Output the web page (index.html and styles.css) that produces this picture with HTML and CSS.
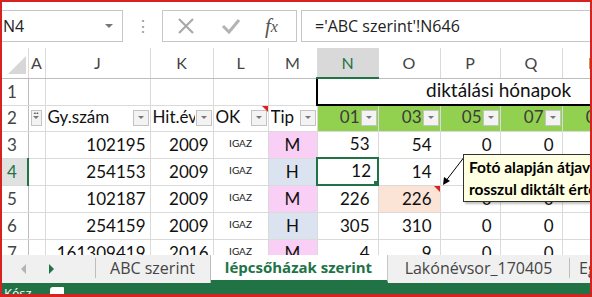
FILE: index.html
```html
<!DOCTYPE html>
<html>
<head>
  <meta charset="UTF-8">
  <title>lépcsőházak szerint</title>
  <link rel="stylesheet" href="styles.css">
</head>
<body>
  <div class="frame">
    <div class="formula-bar">
      <div class="name-box"><span>N4</span><i class="caret"></i></div>
      <div class="grip">⋮</div>
      <div class="fx-tools">
        <svg class="ico" width="18" height="18" viewBox="0 0 18 18"><path d="M2 2 L16 16 M16 2 L2 16" stroke="#a9a9a9" stroke-width="2.2" fill="none"/></svg>
        <svg class="ico" width="20" height="18" viewBox="0 0 20 18"><path d="M2 9 L8 15 L18 3" stroke="#b3b3b3" stroke-width="3" fill="none"/></svg>
        <span class="fx">f<sub>x</sub></span>
      </div>
      <div class="formula">='ABC szerint'!N646</div>
    </div>

    <div class="grid">
      <table class="sheet">
        <colgroup>
          <col style="width:26px"><col style="width:17px"><col style="width:105px"><col style="width:63px">
          <col style="width:55px"><col style="width:49px"><col style="width:61px"><col style="width:62px">
          <col style="width:60px"><col style="width:62px"><col style="width:62px">
        </colgroup>
        <tr class="head">
          <th class="corner"></th>
          <th class="ch">A</th><th class="ch">J</th><th class="ch">K</th><th class="ch">L</th><th class="ch">M</th>
          <th class="ch on">N</th><th class="ch">O</th><th class="ch">P</th><th class="ch">Q</th><th class="ch">R</th>
        </tr>
        <tr class="r1">
          <th class="rh">1</th>
          <td></td><td></td><td></td><td></td><td></td>
          <td class="title" colspan="5">diktálási hónapok</td>
        </tr>
        <tr>
          <th class="rh">2</th>
          <td class="hd"><div class="hdc"><i class="flt mini"></i></div></td>
          <td class="hd"><div class="hdc"><span>Gy.szám</span><i class="flt"></i></div></td>
          <td class="hd"><div class="hdc"><span>Hit.év</span><i class="flt"></i></div></td>
          <td class="hd note"><div class="hdc"><span>OK</span><i class="flt"></i></div></td>
          <td class="hd"><div class="hdc"><span>Tip</span><i class="flt"></i></div></td>
          <td class="hd mo"><div class="hdc"><span>01</span><i class="flt"></i></div></td>
          <td class="hd mo"><div class="hdc"><span>03</span><i class="flt"></i></div></td>
          <td class="hd mo"><div class="hdc"><span>05</span><i class="flt"></i></div></td>
          <td class="hd mo"><div class="hdc"><span>07</span><i class="flt"></i></div></td>
          <td class="hd mo"><div class="hdc"><span>09</span><i class="flt"></i></div></td>
        </tr>
        <tr>
          <th class="rh">3</th><td></td>
          <td class="num">102195</td><td class="num">2009</td><td class="bool">IGAZ</td><td class="tip m">M</td>
          <td class="val">53</td><td class="val">54</td><td class="val">0</td><td class="val">0</td><td class="val">0</td>
        </tr>
        <tr>
          <th class="rh on">4</th><td></td>
          <td class="num">254153</td><td class="num">2009</td><td class="bool">IGAZ</td><td class="tip h">H</td>
          <td class="val sel">12</td><td class="val">14</td><td class="val">0</td><td class="val">0</td><td class="val">0</td>
        </tr>
        <tr>
          <th class="rh">5</th><td></td>
          <td class="num">102187</td><td class="num">2009</td><td class="bool">IGAZ</td><td class="tip m">M</td>
          <td class="val">226</td><td class="val fix note">226</td><td class="val">0</td><td class="val">0</td><td class="val">0</td>
        </tr>
        <tr>
          <th class="rh">6</th><td></td>
          <td class="num">254159</td><td class="num">2009</td><td class="bool">IGAZ</td><td class="tip h">H</td>
          <td class="val">305</td><td class="val">310</td><td class="val">0</td><td class="val">0</td><td class="val">0</td>
        </tr>
        <tr>
          <th class="rh">7</th><td></td>
          <td class="num">161309419</td><td class="num">2016</td><td class="bool">IGAZ</td><td class="tip m">M</td>
          <td class="val">4</td><td class="val">9</td><td class="val">0</td><td class="val">0</td><td class="val">0</td>
        </tr>
      </table>

      <svg class="arrow" width="30" height="32" viewBox="0 0 30 32">
        <path d="M25 1 L5 27" stroke="#000" stroke-width="1"/>
        <path d="M3 30 L4 22 L10 26 Z" fill="#000"/>
      </svg>
      <div class="comment">
        <p>Fotó alapján átjavítva,</p>
        <p>rosszul diktált érték</p>
      </div>
    </div>

    <div class="tabs">
      <div class="nav"><i class="prev"></i><i class="next"></i></div>
      <div class="tab">ABC szerint</div>
      <div class="tab active">lépcsőházak szerint</div>
      <div class="tab">Lakónévsor_170405</div>
      <div class="tab last">Egyéb</div>
    </div>

    <div class="status">
      <span class="ready">Kész</span>
      <i class="rec"></i>
    </div>
  </div>
</body>
</html>
```

FILE: styles.css
```css
body {
    margin: 0;
    background: #fff;
}
.frame {
    width: 592px;
    height: 297px;
    box-sizing: border-box;
    border: 2px solid #d6231f;
    border-bottom-width: 3px;
    display: flex;
    flex-direction: column;
    overflow: hidden;
    background: #fff;
}

/* formula bar */
.formula-bar {
    height: 46px;
    flex: none;
    display: flex;
    align-items: flex-start;
    padding-top: 8px;
    box-sizing: border-box;
    font-family: 'Open Sans', sans-serif;
}
.name-box {
    width: 121px;
    height: 32px;
    box-sizing: border-box;
    border: 1px solid #c6c6c6;
    border-left: none;
    display: flex;
    align-items: center;
    justify-content: space-between;
    padding: 0 9px 0 1px;
    font-size: 16px;
    color: #222;
}
.caret {
    width: 0;
    height: 0;
    border-left: 4px solid transparent;
    border-right: 4px solid transparent;
    border-top: 4px solid #777;
}
.grip {
    width: 39px;
    text-align: center;
    color: #9a9a9a;
    font-size: 16px;
    line-height: 32px;
}
.fx-tools {
    width: 135px;
    height: 32px;
    box-sizing: border-box;
    border: 1px solid #c6c6c6;
    display: flex;
    align-items: center;
    padding-left: 14px;
    gap: 26px;
}
.fx {
    font-family: 'Liberation Serif', serif;
    font-style: italic;
    font-size: 21px;
    color: #555;
    margin-left: -2px;
}
.fx sub {
    font-size: 16px;
    vertical-align: 1px;
}
.formula {
    flex: 1;
    height: 32px;
    margin-left: 4px;
    box-sizing: border-box;
    border: 1px solid #c6c6c6;
    border-right: none;
    padding-left: 13px;
    font-size: 16px;
    line-height: 30px;
    color: #222;
    white-space: nowrap;
}

/* grid */
.grid {
    position: relative;
    height: 207px;
    flex: none;
    overflow: hidden;
}
.sheet {
    border-collapse: collapse;
    table-layout: fixed;
    width: 622px;
    font-family: 'Lato', sans-serif;
    font-size: 17px;
    color: #111;
}
.sheet td, .sheet th {
    border: 1px solid #dadada;
    padding: 0 4px 2px;
    height: 26px;
    box-sizing: border-box;
    vertical-align: bottom;
    white-space: nowrap;
    overflow: hidden;
    line-height: 22px;
    font-weight: normal;
}
.sheet tr:first-child th { border-top: none; }
.sheet tr > :first-child { border-left: none; }
.sheet .head th {
    height: 30px;
    vertical-align: middle;
    padding: 0;
    text-align: center;
    color: #444;
    font-size: 16px;
    border-bottom: 1px solid #bdbdbd;
}
.sheet .ch.on {
    background: #d9d9d9;
    color: #217346;
    border-bottom: 2px solid #217346;
}
.corner {
    position: relative;
    border-right: 1px solid #bdbdbd;
}
.corner::after {
    content: '';
    position: absolute;
    right: 2px;
    bottom: 4px;
    border-left: 18px solid transparent;
    border-bottom: 18px solid #d7d7d7;
}
.sheet .r1 td, .sheet .r1 th { height: 27px; }
.sheet .rh {
    text-align: left;
    padding-left: 5px;
    color: #444;
    border-right: 1px solid #bdbdbd;
}
.sheet .rh.on {
    background: #e1e1e1;
    color: #217346;
    border-right: 2px solid #217346;
}
.sheet .title {
    border-left: 2px solid #000;
    border-bottom: 2px solid #000;
    padding-left: 108px;
    padding-bottom: 3px;
    font-size: 19px;
}
.sheet .hd { padding: 0 1px 4px 2px; }
.hdc {
    display: flex;
    align-items: flex-end;
    gap: 1px;
}
.hdc span {
    flex: 1;
    min-width: 0;
    overflow: hidden;
    line-height: 20px;
}
.sheet .mo { background: #92d050; }
.mo .hdc span {
    text-align: right;
    color: #3b3b3b;
}
.flt {
    flex: none;
    width: 16px;
    height: 16px;
    box-sizing: border-box;
    border: 1px solid #c3c3c3;
    background: #f3f3f3;
    display: flex;
    align-items: center;
    justify-content: center;
    margin-bottom: 1px;
}
.flt::after {
    content: '';
    border-left: 3px solid transparent;
    border-right: 3px solid transparent;
    border-top: 3px solid #777;
}
.flt.mini {
    width: 11px;
    position: relative;
}
.flt.mini::before {
    content: '¨';
    position: absolute;
    top: -5px;
    left: 1px;
    font-size: 14px;
    color: #333;
}
.num, .val { text-align: right; }
.sheet .val { padding-right: 8px; }
.sheet .bool {
    text-align: center;
    font-size: 10px;
    color: #222;
    padding-bottom: 4px;
}
.tip { text-align: center; }
.sheet .tip.m { background: #f9cff5; }
.sheet .tip.h { background: #dbe2f0; }
.sheet .fix { background: #fbe3d6; }
.note { position: relative; }
.note::before {
    content: '';
    position: absolute;
    top: 0;
    right: 0;
    border-left: 6px solid transparent;
    border-top: 6px solid #e0201c;
}
.sheet .sel {
    position: relative;
    border: 2px solid #217346;
    padding-right: 6px;
}
.sel::after {
    content: '';
    position: absolute;
    right: -3px;
    bottom: -3px;
    width: 5px;
    height: 5px;
    background: #217346;
    border: 1px solid #fff;
}

/* cell comment */
.arrow {
    position: absolute;
    left: 438px;
    top: 107px;
}
.comment {
    position: absolute;
    left: 461px;
    top: 106px;
    width: 150px;
    height: 48px;
    box-sizing: border-box;
    border: 1px solid #333;
    background: #ffffe1;
    box-shadow: 2px 2px 2px rgba(0, 0, 0, 0.25);
    padding: 1px 0 0 5px;
    font-family: 'Lato', sans-serif;
    font-weight: bold;
    font-size: 15.5px;
    white-space: nowrap;
}
.comment p {
    margin: 0;
    line-height: 22px;
}

/* sheet tabs */
.tabs {
    height: 28px;
    flex: none;
    display: flex;
    background: #f0f0f0;
    font-family: 'Open Sans', sans-serif;
    font-size: 16px;
    color: #444;
    white-space: nowrap;
}
.nav {
    width: 93px;
    flex: none;
    display: flex;
    align-items: center;
    gap: 23px;
    padding-left: 19px;
    box-sizing: border-box;
}
.prev, .next {
    width: 0;
    height: 0;
    border-top: 5px solid transparent;
    border-bottom: 5px solid transparent;
}
.prev { border-right: 5px solid #b4b4b4; }
.next { border-left: 5px solid #217346; }
.tab {
    flex: none;
    text-align: center;
    line-height: 26px;
    position: relative;
}
.tab::before {
    content: '';
    position: absolute;
    left: 0;
    top: 3px;
    height: 20px;
    border-left: 1px solid #bdbdbd;
}
.tab:nth-child(2) { width: 115px; }
.tab.active {
    width: 178px;
    background: #fff;
    color: #217346;
    font-weight: bold;
    border-right: 1px solid #c6c6c6;
    border-bottom: 3px solid #217346;
    box-sizing: border-box;
    line-height: 24px;
    font-size: 15px;
}
.tab.active::before { top: 0; height: 28px; }
.tab:nth-child(4) { width: 181px; }
.tab:nth-child(4)::before { display: none; }
.tab.last {
    padding-left: 10px;
    text-align: left;
}

/* status bar */
.status {
    flex: 1;
    background: #217346;
    color: #fff;
    font-family: 'Open Sans', sans-serif;
    font-size: 13px;
    overflow: hidden;
    position: relative;
    padding-left: 2px;
}
.ready {
    display: block;
    line-height: 13px;
    margin-top: 4px;
}
.rec {
    position: absolute;
    left: 48px;
    top: 4px;
    width: 14px;
    height: 8px;
    background: #fff;
    border-radius: 3px 1px 0 0;
}
```
